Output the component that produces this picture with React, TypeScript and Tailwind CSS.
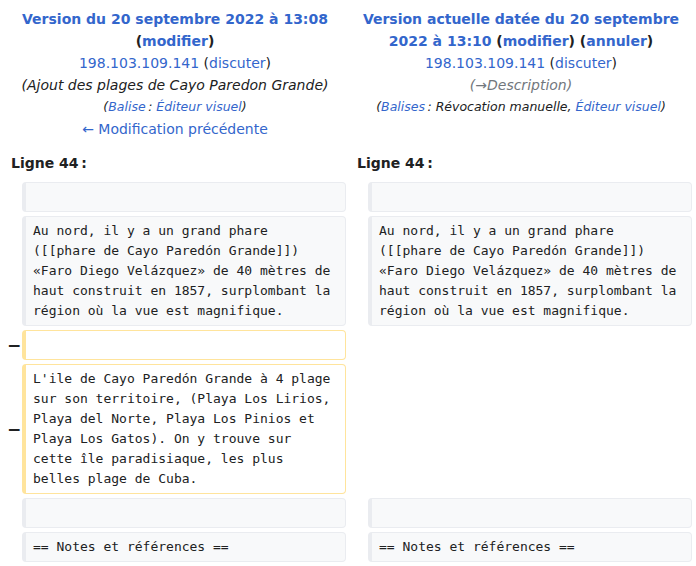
const link = "text-[#3366cc]";
const mono = "font-['DejaVu_Sans_Mono',monospace] text-[13px] leading-[20px] whitespace-pre-wrap break-words";

function Marker({ sign }: { sign?: string }) {
  return (
    <td className="p-0 text-right align-middle font-bold text-[17px] leading-[20px]">
      {sign ? <span className="relative left-[3px]">{sign}</span> : null}
    </td>
  );
}

function Context({ text }: { text: string }) {
  return (
    <td className={`align-top rounded-[4px] border border-l-4 border-[#eaecf0] bg-[#f8f9fa] pl-[7px] pr-[10px] py-[4px] ${mono}`}>
      {text === "" ? <br /> : text}
    </td>
  );
}

function Deleted({ text }: { text: string }) {
  return (
    <td className={`align-top rounded-[4px] border border-l-4 border-[#ffe49c] bg-white pl-[7px] pr-[10px] py-[4px] ${mono}`}>
      {text === "" ? <br /> : text}
    </td>
  );
}

const para =
  "Au nord, il y a un grand phare ([[phare de Cayo Paredón Grande]]) «Faro Diego Velázquez» de 40 mètres de haut construit en 1857, surplombant la région où la vue est magnifique.";
const removed =
  "L'ile de Cayo Paredón Grande à 4 plage sur son territoire, (Playa Los Lirios, Playa del Norte, Playa Los Pinios et Playa Los Gatos). On y trouve sur cette île paradisiaque, les plus belles plage de Cuba.";

export default function App() {
  return (
    <div className="w-[696px] min-h-[566px] bg-white font-['DejaVu_Sans',sans-serif] text-[#202122]">
      <table className="w-full table-fixed border-separate border-spacing-[4px] text-[14px] leading-[22px]">
        <colgroup>
          <col className="w-[14px]" />
          <col />
          <col className="w-[14px]" />
          <col />
        </colgroup>
        <tbody>
          <tr>
            <td colSpan={2} className="text-center align-top px-[7px] py-[4px]">
              <div className="font-bold">
                <a className={link}>Version du 20 septembre 2022 à 13:08</a> (<a className={link}>modifier</a>)
              </div>
              <div>
                <a className={link}>198.103.109.141</a> (<a className={link}>discuter</a>)
              </div>
              <div className="italic">(Ajout des plages de Cayo Paredon Grande)</div>
              <div className="italic text-[12.5px]">
                (<a className={link}>Balise</a>{"\u202f"}: <a className={link}>Éditeur visuel</a>)
              </div>
              <div>
                <a className={link}>← Modification précédente</a>
              </div>
            </td>
            <td colSpan={2} className="text-center align-top px-[7px] py-[4px]">
              <div className="font-bold">
                <a className={link}>Version actuelle datée du 20 septembre 2022 à 13:10</a> (<a className={link}>modifier</a>) (<a className={link}>annuler</a>)
              </div>
              <div>
                <a className={link}>198.103.109.141</a> (<a className={link}>discuter</a>)
              </div>
              <div className="italic text-[#72777d]">(→Description)</div>
              <div className="italic text-[12.5px]">
                (<a className={link}>Balises</a>{"\u202f"}: Révocation manuelle, <a className={link}>Éditeur visuel</a>)
              </div>
            </td>
          </tr>
          <tr>
            <td colSpan={2} className="font-bold px-[7px] py-[4px]">Ligne 44{"\u202f"}:</td>
            <td colSpan={2} className="font-bold px-[7px] py-[4px]">Ligne 44{"\u202f"}:</td>
          </tr>
          <tr>
            <Marker />
            <Context text="" />
            <Marker />
            <Context text="" />
          </tr>
          <tr>
            <Marker />
            <Context text={para} />
            <Marker />
            <Context text={para} />
          </tr>
          <tr>
            <Marker sign="−" />
            <Deleted text="" />
            <td colSpan={2}></td>
          </tr>
          <tr>
            <Marker sign="−" />
            <Deleted text={removed} />
            <td colSpan={2}></td>
          </tr>
          <tr>
            <Marker />
            <Context text="" />
            <Marker />
            <Context text="" />
          </tr>
          <tr>
            <Marker />
            <Context text="== Notes et références ==" />
            <Marker />
            <Context text="== Notes et références ==" />
          </tr>
        </tbody>
      </table>
    </div>
  );
}
